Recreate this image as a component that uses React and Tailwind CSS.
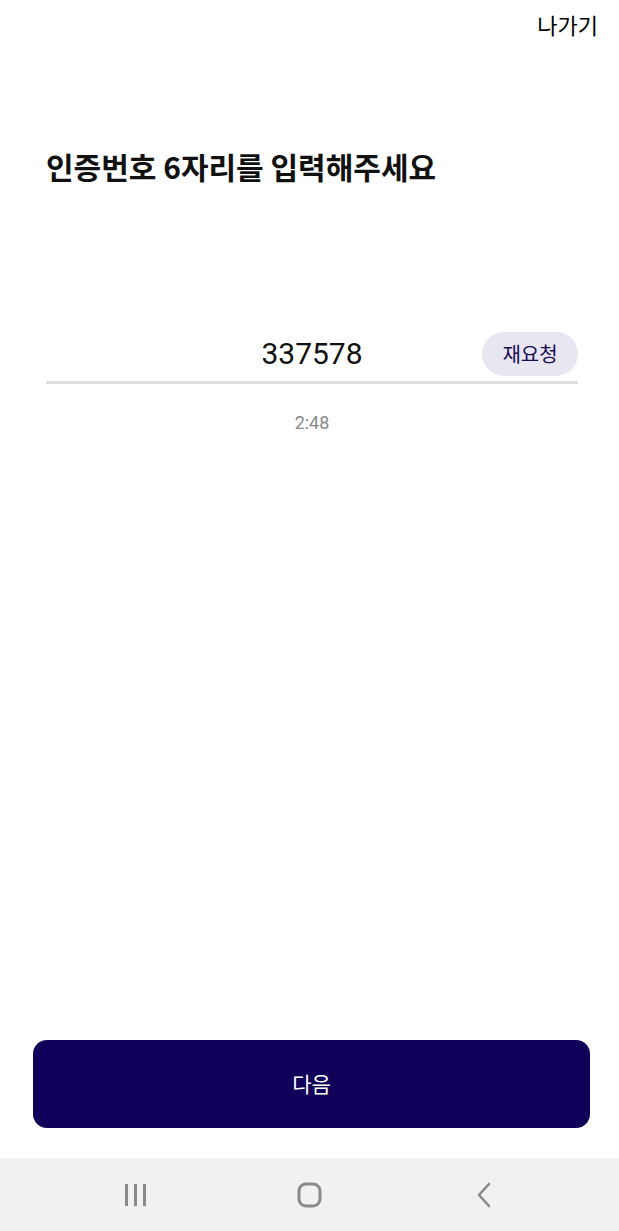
export default function App() {
  const kr = { fontFamily: '"Noto Sans CJK KR", "Noto Sans", sans-serif' };
  return (
    <div className="w-[619px] h-[1231px] bg-white flex flex-col" style={kr}>
      <div className="flex justify-end pr-[21px] pt-[8px] h-[40px]">
        <span className="text-[22px] leading-[32px] text-black">나가기</span>
      </div>
      <h1 className="mt-[100px] pl-[46px] text-[30px] leading-[52px] font-bold text-[#111]">
        인증번호 6자리를 입력해주세요
      </h1>
      <div className="mt-[144px] ml-[46px] mr-[41px]">
        <div className="relative h-[48px] flex items-center justify-center border-b-[3px] border-[#dedede] pb-[10px]">
          <span
            className="text-[30px] text-[#111] leading-[40px]"
            style={{ fontFamily: 'Roboto, "Noto Sans", sans-serif' }}
          >
            337578
          </span>
          <div className="absolute right-0 top-[-4px] w-[96px] h-[44px] rounded-full bg-[#e8e6f1] flex items-center justify-center">
            <span className="text-[20px] text-[#160b55] leading-none">재요청</span>
          </div>
        </div>
        <div
          className="mt-[26px] text-center text-[18px] leading-[26px] text-[#888]"
          style={{ fontFamily: 'Roboto, "Noto Sans", sans-serif' }}
        >
          2:48
        </div>
      </div>
      <div className="flex-1" />
      <div className="pl-[33px] pr-[29px]">
        <button className="w-full h-[88px] rounded-[14px] bg-[#10005a] text-white text-[21px] flex items-center justify-center">
          다음
        </button>
      </div>
      <div className="mt-[30px] h-[73px] bg-[#f1f1f1] flex items-center justify-center gap-[134px]">
        <div className="flex justify-center w-[40px]">
          <svg width="24" height="24" viewBox="0 0 24 24">
            <rect x="1" y="1" width="3" height="22" fill="#8a8a8a" />
            <rect x="10" y="1" width="3" height="22" fill="#8a8a8a" />
            <rect x="19" y="1" width="3" height="22" fill="#8a8a8a" />
          </svg>
        </div>
        <div className="flex justify-center w-[40px]">
          <svg width="26" height="26" viewBox="0 0 26 26">
            <rect x="2" y="2" width="21" height="22" rx="7" fill="none" stroke="#8a8a8a" strokeWidth="3" />
          </svg>
        </div>
        <div className="flex justify-center w-[40px]">
          <svg width="18" height="26" viewBox="0 0 18 26">
            <polyline points="14,2 4,13 14,24" fill="none" stroke="#8a8a8a" strokeWidth="2.6" strokeLinecap="round" strokeLinejoin="round" />
          </svg>
        </div>
      </div>
    </div>
  );
}
